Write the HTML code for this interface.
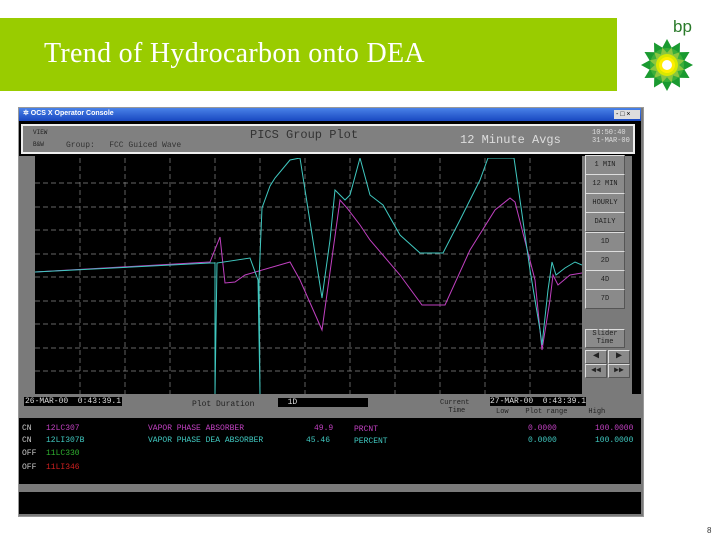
<!DOCTYPE html>
<html><head><style>
body{margin:0;width:720px;height:540px;background:#fff;position:relative;overflow:hidden;font-family:"Liberation Sans",sans-serif}
.a{position:absolute}
.btn{position:absolute;left:585px;width:38px;height:18px;background:#8a8a8a;border-top:1px solid #ddd;border-left:1px solid #ddd;border-bottom:1px solid #555;border-right:1px solid #555;font:7px "Liberation Mono",monospace;color:#222;text-align:center;line-height:18px}
.d{position:absolute;font:8px "Liberation Mono",monospace;white-space:pre}
</style></head><body>
<div class="a" style="left:0;top:18px;width:617px;height:73px;background:#99cc00"></div>
<div class="a" style="left:44px;top:38px;font:28px 'Liberation Serif',serif;color:#fff;letter-spacing:0.3px">Trend of Hydrocarbon onto DEA</div>
<div class="a" style="left:673px;top:17px;font:17px 'Liberation Sans',sans-serif;color:#2a7a2a">bp</div>
<svg class="a" style="left:640px;top:38px" width="54" height="54" viewBox="-27 -27 54 54">
<g fill="#1a9a30">
<polygon points="0,-26 6,-15 -6,-15" transform="rotate(0)"/><polygon points="0,-26 6,-15 -6,-15" transform="rotate(30)"/><polygon points="0,-26 6,-15 -6,-15" transform="rotate(60)"/><polygon points="0,-26 6,-15 -6,-15" transform="rotate(90)"/><polygon points="0,-26 6,-15 -6,-15" transform="rotate(120)"/><polygon points="0,-26 6,-15 -6,-15" transform="rotate(150)"/><polygon points="0,-26 6,-15 -6,-15" transform="rotate(180)"/><polygon points="0,-26 6,-15 -6,-15" transform="rotate(210)"/><polygon points="0,-26 6,-15 -6,-15" transform="rotate(240)"/><polygon points="0,-26 6,-15 -6,-15" transform="rotate(270)"/><polygon points="0,-26 6,-15 -6,-15" transform="rotate(300)"/><polygon points="0,-26 6,-15 -6,-15" transform="rotate(330)"/></g>
<circle r="17" fill="#3aae3a"/>
<g fill="#8cc63f"><polygon points="0,-18 4,-10 -4,-10" transform="rotate(15)"/><polygon points="0,-18 4,-10 -4,-10" transform="rotate(45)"/><polygon points="0,-18 4,-10 -4,-10" transform="rotate(75)"/><polygon points="0,-18 4,-10 -4,-10" transform="rotate(105)"/><polygon points="0,-18 4,-10 -4,-10" transform="rotate(135)"/><polygon points="0,-18 4,-10 -4,-10" transform="rotate(165)"/><polygon points="0,-18 4,-10 -4,-10" transform="rotate(195)"/><polygon points="0,-18 4,-10 -4,-10" transform="rotate(225)"/><polygon points="0,-18 4,-10 -4,-10" transform="rotate(255)"/><polygon points="0,-18 4,-10 -4,-10" transform="rotate(285)"/><polygon points="0,-18 4,-10 -4,-10" transform="rotate(315)"/><polygon points="0,-18 4,-10 -4,-10" transform="rotate(345)"/></g>
<circle r="11" fill="#d8e800"/><circle r="8" fill="#ffee00"/><circle r="5" fill="#fff"/>
</svg>
<div class="a" style="left:18px;top:107px;width:624px;height:408px;background:#7a7a7a;border:1px solid #999"></div>
<div class="a" style="left:19px;top:108px;width:622px;height:13px;background:linear-gradient(#4a82e8,#1848c0)"></div>
<div class="a" style="left:23px;top:109px;font:bold 7px 'Liberation Sans',sans-serif;color:#fff">✲ OCS X Operator Console</div>
<div class="a" style="left:614px;top:110px;width:26px;height:9px;background:#ddd;font:7px sans-serif;line-height:9px;color:#000">&nbsp;- □ ×</div>
<div class="a" style="left:19px;top:121px;width:622px;height:393px;background:#000"></div>
<div class="a" style="left:21px;top:124px;width:614px;height:30px;background:#808080;border:2px solid #eee;box-sizing:border-box"></div>
<div class="d" style="left:33px;top:129px;color:#222;font-size:6px">VIEW</div>
<div class="d" style="left:33px;top:141px;color:#222;font-size:6px">B&amp;W</div>
<div class="d" style="left:66px;top:141px;color:#333">Group:   FCC Guiced Wave</div>
<div class="d" style="left:250px;top:128px;color:#333;font-size:12px">PICS Group Plot</div>
<div class="d" style="left:460px;top:133px;color:#ddd;font-size:12px">12 Minute Avgs</div>
<div class="d" style="left:592px;top:129px;color:#ddd;font-size:7px">10:50:40
31-MAR-00</div>
<div class="a" style="left:19px;top:156px;width:16px;height:238px;background:#7a7a7a"></div>
<div class="a" style="left:582px;top:156px;width:50px;height:238px;background:#7a7a7a"></div>
<div class="btn" style="top:155px">1 MIN</div>
<div class="btn" style="top:174px">12 MIN</div>
<div class="btn" style="top:193px">HOURLY</div>
<div class="btn" style="top:212px">DAILY</div>
<div class="btn" style="top:232px">1D</div>
<div class="btn" style="top:251px">2D</div>
<div class="btn" style="top:270px">4D</div>
<div class="btn" style="top:289px">7D</div>
<div class="btn" style="top:329px;line-height:8px;height:17px">Slider<br>Time</div>
<div class="btn" style="top:350px;width:20px;height:12px;line-height:12px;font-size:10px">◀</div>
<div class="btn" style="top:350px;left:608px;width:20px;height:12px;line-height:12px;font-size:10px">▶</div>
<div class="btn" style="top:364px;width:20px;height:12px;line-height:12px;font-size:8px">◀◀</div>
<div class="btn" style="top:364px;left:608px;width:20px;height:12px;line-height:12px;font-size:8px">▶▶</div>
<svg class="a" style="left:35px;top:158px" width="547" height="236">
<g stroke="#888" stroke-width="0.7" stroke-dasharray="5,3">
<line x1="45" y1="0" x2="45" y2="236"/><line x1="90" y1="0" x2="90" y2="236"/><line x1="135" y1="0" x2="135" y2="236"/><line x1="180" y1="0" x2="180" y2="236"/><line x1="225" y1="0" x2="225" y2="236"/><line x1="270" y1="0" x2="270" y2="236"/><line x1="315" y1="0" x2="315" y2="236"/><line x1="360" y1="0" x2="360" y2="236"/><line x1="405" y1="0" x2="405" y2="236"/><line x1="450" y1="0" x2="450" y2="236"/><line x1="495" y1="0" x2="495" y2="236"/>
<line x1="0" y1="25" x2="547" y2="25"/><line x1="0" y1="49" x2="547" y2="49"/><line x1="0" y1="72" x2="547" y2="72"/><line x1="0" y1="96" x2="547" y2="96"/><line x1="0" y1="119" x2="547" y2="119"/><line x1="0" y1="143" x2="547" y2="143"/><line x1="0" y1="166" x2="547" y2="166"/><line x1="0" y1="190" x2="547" y2="190"/><line x1="0" y1="213" x2="547" y2="213"/>
</g>
<polyline fill="none" stroke="#c040c0" stroke-width="1" points="0,114 175,104 185,79 190,125 200,124 210,117 255,104 265,122 287,172 305,42 312,50 325,67 335,82 365,117 387,147 410,147 435,92 460,52 475,40 480,44 500,122 507,192 515,142 518,117 523,127 535,117 547,115"/>
<polyline fill="none" stroke="#40c8c0" stroke-width="1" points="0,114 175,105 180,105 180,236 182,105 215,100 223,122 225,236 224,122 227,50 235,28 240,20 255,2 265,0 287,140 295,82 300,32 310,42 315,37 325,0 335,37 348,47 365,77 385,95 408,95 425,62 445,22 453,0 479,0 495,112 505,172 507,187 513,132 517,104 521,117 530,110 540,104 547,107"/>
</svg>
<div class="a" style="left:19px;top:394px;width:622px;height:24px;background:#7a7a7a"></div>
<div class="d" style="left:24px;top:397px;color:#ddd;background:#000;padding:0 1px">26-MAR-00  0:43:39.1</div>
<div class="d" style="left:192px;top:400px;color:#222">Plot Duration</div>
<div class="d" style="left:278px;top:398px;color:#ddd;background:#000;width:90px">  1D</div>
<div class="d" style="left:440px;top:399px;color:#222;font-size:7px">Current
  Time</div>
<div class="d" style="left:490px;top:397px;color:#ddd;background:#000">27-MAR-00  0:43:39.1</div>
<div class="d" style="left:496px;top:408px;color:#222;font-size:7px">Low    Plot range     High</div>
<div class="d" style="left:22px;top:424px;color:#ccc">CN</div><div class="d" style="left:46px;top:424px;color:#c040c0">12LC307</div><div class="d" style="left:148px;top:424px;color:#c040c0">VAPOR PHASE ABSORBER</div><div class="d" style="left:314px;top:424px;color:#c040c0">49.9</div><div class="d" style="left:354px;top:425px;color:#c040c0">PRCNT</div><div class="d" style="left:528px;top:424px;color:#c040c0">0.0000</div><div class="d" style="left:595px;top:424px;color:#c040c0">100.0000</div>
<div class="d" style="left:22px;top:436px;color:#ccc">CN</div><div class="d" style="left:46px;top:436px;color:#40c8c0">12LI307B</div><div class="d" style="left:148px;top:436px;color:#40c8c0">VAPOR PHASE DEA ABSORBER</div><div class="d" style="left:306px;top:436px;color:#40c8c0">45.46</div><div class="d" style="left:354px;top:437px;color:#40c8c0">PERCENT</div><div class="d" style="left:528px;top:436px;color:#40c8c0">0.0000</div><div class="d" style="left:595px;top:436px;color:#40c8c0">100.0000</div>
<div class="d" style="left:22px;top:449px;color:#ccc">OFF</div><div class="d" style="left:46px;top:449px;color:#30b030">11LC330</div>
<div class="d" style="left:22px;top:463px;color:#ccc">OFF</div><div class="d" style="left:46px;top:463px;color:#d02020">11LI346</div>
<div class="a" style="left:19px;top:484px;width:622px;height:8px;background:#7a7a7a"></div>
<div class="a" style="left:707px;top:526px;font:8px 'Liberation Sans',sans-serif;color:#333">8</div>
</body></html>
